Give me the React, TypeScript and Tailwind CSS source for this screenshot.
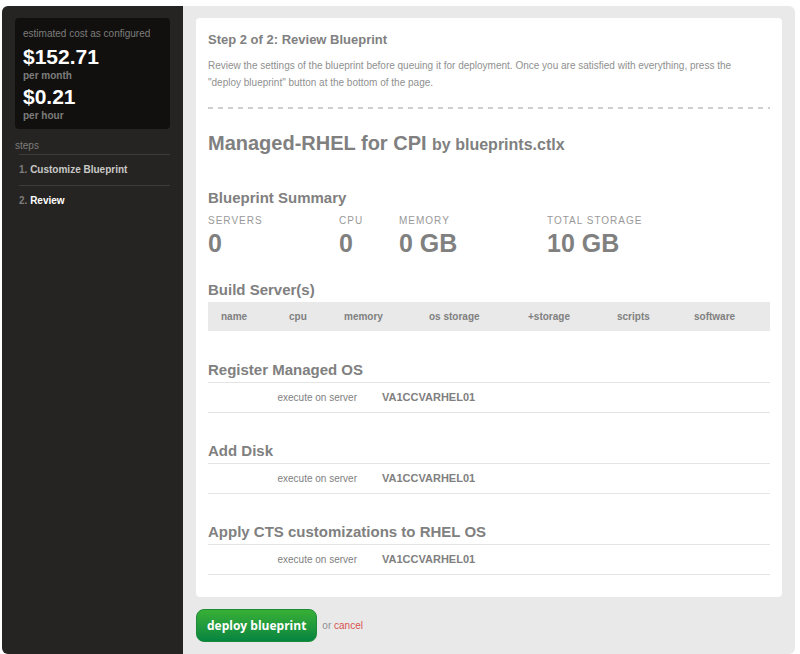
const summary = [
  { label: 'servers', value: '0', width: 'w-[131px]' },
  { label: 'cpu', value: '0', width: 'w-[60px]' },
  { label: 'memory', value: '0 GB', width: 'w-[148px]' },
  { label: 'total storage', value: '10 GB', width: 'flex-1' },
];

const columns = [
  { name: 'name', width: 'w-[81px] pl-[13px]' },
  { name: 'cpu', width: 'w-[55px]' },
  { name: 'memory', width: 'w-[85px]' },
  { name: 'os storage', width: 'w-[99px]' },
  { name: '+storage', width: 'w-[89px]' },
  { name: 'scripts', width: 'w-[77px]' },
  { name: 'software', width: '' },
];

const tasks = [
  { title: 'Register Managed OS', server: 'VA1CCVARHEL01' },
  { title: 'Add Disk', server: 'VA1CCVARHEL01' },
  { title: 'Apply CTS customizations to RHEL OS', server: 'VA1CCVARHEL01' },
];

function Sidebar() {
  return (
    <aside className="w-[181px] shrink-0 rounded-l-md bg-[#252422] px-[13px] pt-3">
      <section className="rounded-sm bg-[#11100f] px-2 pt-2 pb-[6px] text-[#7d7d7b]">
        <h2 className="text-[10px] leading-4 whitespace-nowrap">estimated cost as configured</h2>
        <p className="pt-[3px] text-[21px] leading-6 font-bold text-white">$152.71</p>
        <p className="text-[10px] leading-[14px] font-bold">per month</p>
        <p className="pt-[2px] text-[21px] leading-6 font-bold text-white">$0.21</p>
        <p className="text-[10px] leading-[14px] font-bold">per hour</p>
      </section>
      <h2 className="mt-2 text-[10px] leading-[17px] text-[#7d7d7b]">steps</h2>
      <ol className="ml-1 text-[10px] font-bold text-[#7d7d7b]">
        <li className="border-t border-[#3d3c3a] leading-[30px]">
          1. <a href="#customize" className="text-[#c9c9c7]">Customize Blueprint</a>
        </li>
        <li className="border-t border-[#3d3c3a] leading-[30px]">
          2. <a href="#review" aria-current="step" className="text-white">Review</a>
        </li>
      </ol>
    </aside>
  );
}

export default function App() {
  return (
    <div className="min-h-screen bg-white pt-[6px] pr-[5px] pl-[2px] font-['Liberation_Sans',Arial,sans-serif] text-[#808080]">
      <div className="flex rounded-md bg-[#e9e9e9]">
        <Sidebar />
        <main className="min-w-0 flex-1 px-[13px] py-3">
          <article className="rounded-sm bg-white px-3 pt-[13px] pb-[22px]">
            <h1 className="text-[13px] leading-[18px] font-bold">Step 2 of 2: Review Blueprint</h1>
            <p className="mt-2 pr-5 text-[10px] leading-[17px] text-[#909090]">
              Review the settings of the blueprint before queuing it for deployment. Once you are satisfied with everything, press the
              "deploy blueprint" button at the bottom of the page.
            </p>
            <hr className="mt-4 h-[2px] border-0 bg-[repeating-linear-gradient(90deg,#cfcfcf_0_5px,transparent_5px_10px)]" />
            <h2 className="mt-5 text-[20px] leading-7 font-bold">
              Managed-RHEL for CPI <span className="text-[16px]">by blueprints.ctlx</span>
            </h2>

            <section className="mt-[27px]">
              <h3 className="text-[15px] leading-6 font-bold">Blueprint Summary</h3>
              <dl className="mt-[3px] flex">
                {summary.map((item) => (
                  <div key={item.label} className={item.width}>
                    <dt className="text-[10px] leading-4 tracking-[1px] text-[#999999] uppercase">{item.label}</dt>
                    <dd className="text-[25px] leading-7 font-bold">{item.value}</dd>
                  </div>
                ))}
              </dl>
            </section>

            <section className="mt-[21px]">
              <h3 className="text-[15px] leading-6 font-bold">Build Server(s)</h3>
              <table className="w-full table-fixed bg-[#e9e9e9] text-left text-[10px] leading-[29px]">
                <thead>
                  <tr>
                    {columns.map((column) => (
                      <th key={column.name} scope="col" className={`p-0 font-bold ${column.width}`}>
                        {column.name}
                      </th>
                    ))}
                  </tr>
                </thead>
              </table>
            </section>

            <div className="mt-[27px] flex flex-col gap-[26px]">
              {tasks.map((task) => (
                <section key={task.title}>
                  <h3 className="text-[15px] leading-6 font-bold">{task.title}</h3>
                  <dl className="flex border-y border-[#e4e4e4] leading-[29px]">
                    <dt className="w-[149px] text-right text-[10px]">execute on server</dt>
                    <dd className="ml-[25px] text-[11px] font-bold">{task.server}</dd>
                  </dl>
                </section>
              ))}
            </div>
          </article>

          <div className="mt-3 flex items-center gap-[5px] text-[10px] text-[#909090]">
            <button
              type="button"
              className="h-[33px] rounded-lg border border-[#1c8a38] bg-linear-to-b from-[#37b034] to-[#048540] px-[10px] font-['Open_Sans',sans-serif] text-[12px] font-bold text-white"
            >
              deploy blueprint
            </button>
            <span>
              or <a href="#cancel" className="text-[#d9534f]">cancel</a>
            </span>
          </div>
        </main>
      </div>
    </div>
  );
}
